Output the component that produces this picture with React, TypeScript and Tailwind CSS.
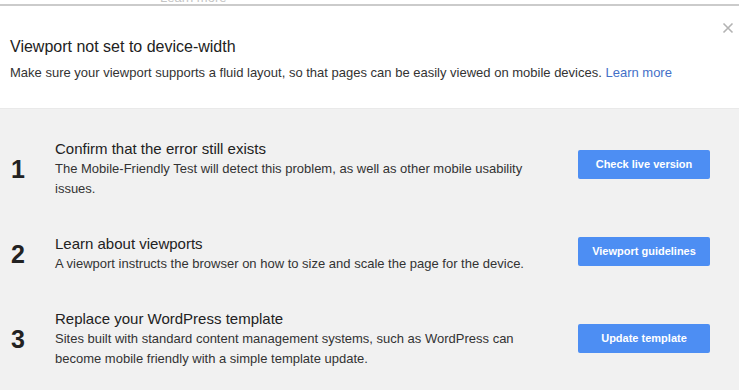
import React from "react";

const steps = [
  {
    n: "1",
    title: "Confirm that the error still exists",
    desc: "The Mobile-Friendly Test will detect this problem, as well as other mobile usability issues.",
    btn: "Check live version",
    shift: "mb-[8px]",
  },
  {
    n: "2",
    title: "Learn about viewports",
    desc: "A viewport instructs the browser on how to size and scale the page for the device.",
    btn: "Viewport guidelines",
    shift: "mb-[4px]",
  },
  {
    n: "3",
    title: "Replace your WordPress template",
    desc: "Sites built with standard content management systems, such as WordPress can become mobile friendly with a simple template update.",
    btn: "Update template",
    shift: "mb-0",
  },
];

export default function App() {
  return (
    <div
      className="w-[739px] h-[390px] overflow-hidden bg-white text-[#222]"
      style={{ fontFamily: '"Liberation Sans", Arial, sans-serif' }}
    >
      {/* top cut-off strip */}
      <div className="h-[4px] overflow-hidden pl-[160px]">
        <div className="-mt-[9px] text-[13px] leading-[13px] text-[#c4c4c4]">Learn more</div>
      </div>
      <div className="h-[2px] bg-[#cbcbcb]" />

      {/* header */}
      <div className="relative h-[102px] pt-[31px] pl-[10px]">
        <button className="absolute right-[5px] top-[16px] w-[12px] h-[12px] text-[#b3b3b3]">
          <svg viewBox="0 0 12 12" width="12" height="12" fill="none" stroke="currentColor" strokeWidth="1.6">
            <path d="M1.5 1.5 L10.5 10.5 M10.5 1.5 L1.5 10.5" />
          </svg>
        </button>
        <div className="text-[16px] leading-[20px] text-[#222]">Viewport not set to device-width</div>
        <div className="mt-[6px] text-[13px] leading-[20px] text-[#333]">
          Make sure your viewport supports a fluid layout, so that pages can be easily viewed on mobile devices.{" "}
          <span className="text-[#4470c8]">Learn more</span>
        </div>
      </div>

      {/* steps */}
      <div className="h-[282px] bg-[#f1f1f1] border-t border-[#e9e9e9] pt-[29px] flex flex-col gap-[34px]">
        {steps.map((s) => (
          <div key={s.n} className="flex items-center">
            <div className="w-[55px] pl-[11px] text-[25px] leading-[28px] font-bold text-[#222]">{s.n}</div>
            <div className="w-[490px]">
              <div className="text-[15px] leading-[21px] text-[#222]">{s.title}</div>
              <div className="text-[13px] leading-[20px] text-[#333]">{s.desc}</div>
            </div>
            <div
              className={`ml-[33px] w-[132px] h-[29px] rounded-[2px] bg-[#4d8ef3] flex items-center justify-center text-[11px] font-bold text-white ${s.shift}`}
            >
              {s.btn}
            </div>
          </div>
        ))}
      </div>
    </div>
  );
}
